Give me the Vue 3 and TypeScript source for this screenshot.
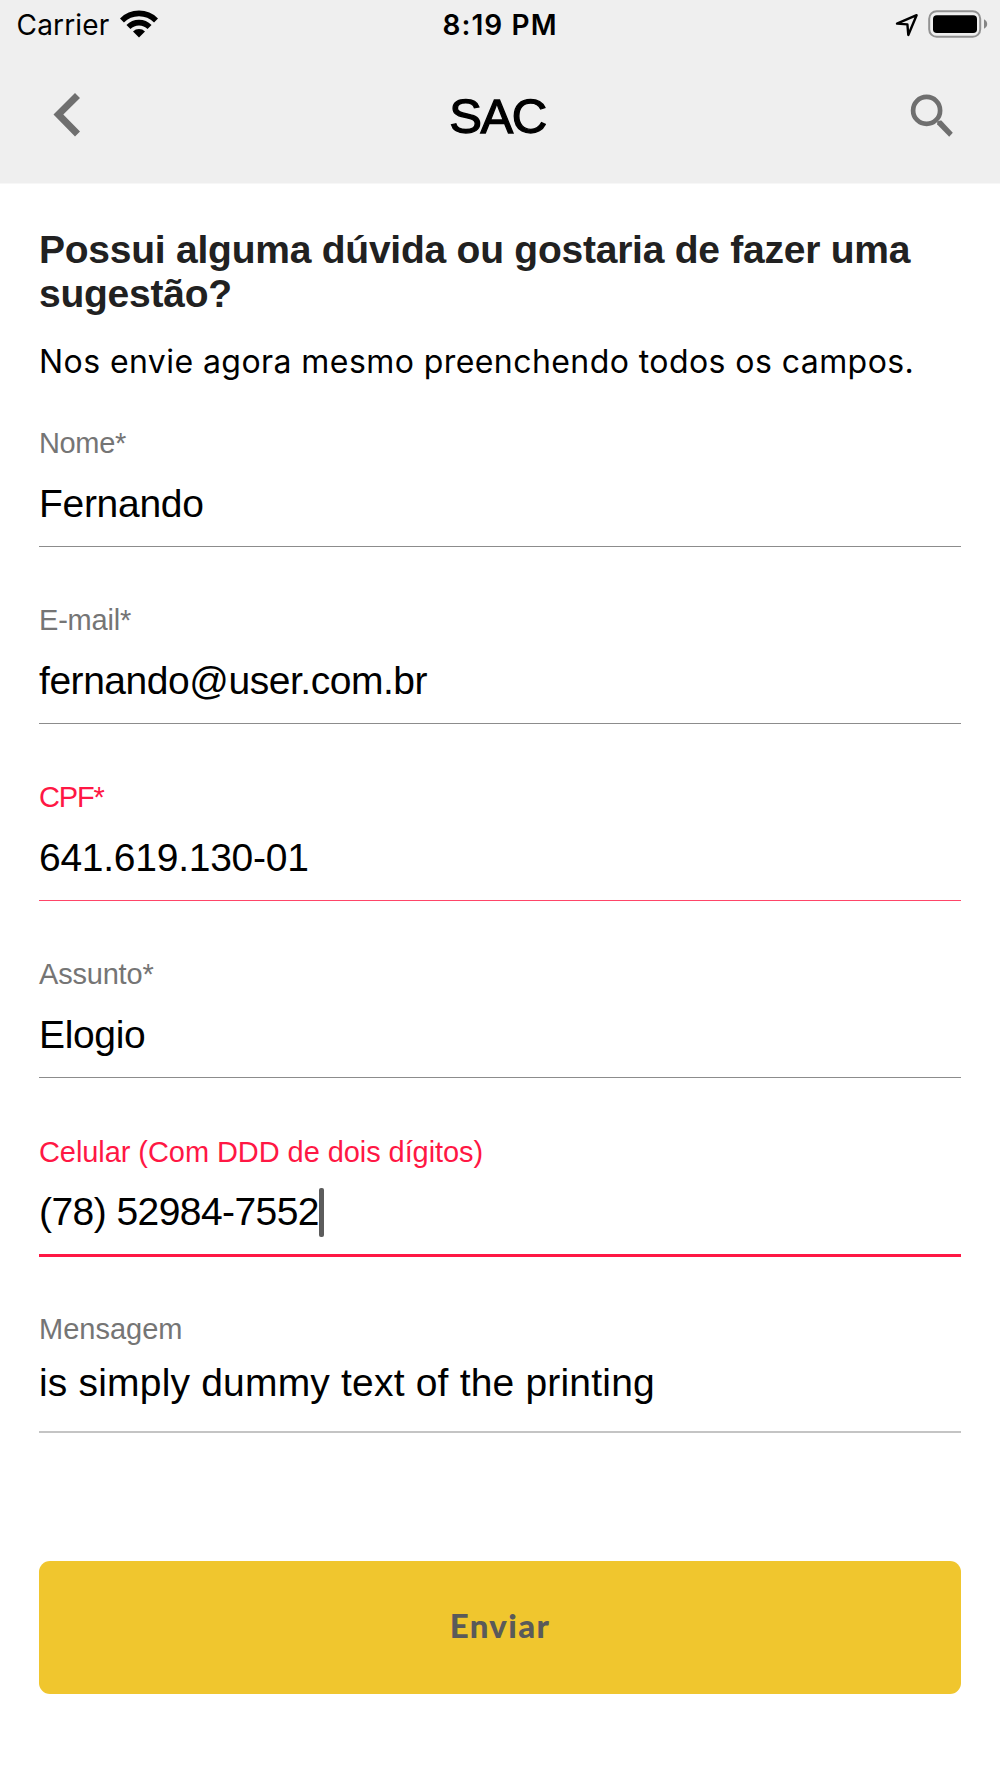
<script setup lang="ts">
interface Field {
  id: string
  label: string
  value: string
  labelTracking: number
  valueTracking: number
  state?: 'error' | 'active' | 'area'
}

const fields: Field[] = [
  { id: 'nome', label: 'Nome*', value: 'Fernando', labelTracking: -0.35, valueTracking: -0.3 },
  { id: 'email', label: 'E-mail*', value: 'fernando@user.com.br', labelTracking: -0.2, valueTracking: -0.46 },
  { id: 'cpf', label: 'CPF*', value: '641.619.130-01', labelTracking: -1.2, valueTracking: -0.26 },
  { id: 'assunto', label: 'Assunto*', value: 'Elogio', labelTracking: -0.2, valueTracking: -0.35 },
  {
    id: 'celular',
    label: 'Celular (Com DDD de dois dígitos)',
    value: '(78) 52984-7552',
    labelTracking: -0.07,
    valueTracking: -0.56,
    state: 'active',
  },
  {
    id: 'mensagem',
    label: 'Mensagem',
    value: 'is simply dummy text of the printing',
    labelTracking: 0,
    valueTracking: 0.19,
    state: 'area',
  },
]
fields[2].state = 'error'
</script>

<template>
  <div class="screen">
    <header class="top">
      <div class="status">
        <div class="status-left">
          <span class="carrier">Carrier</span>
          <svg class="wifi" width="38" height="28" viewBox="0 0 38 28">
            <path d="M1.96 10.46A24.1 24.1 0 0 1 36.04 10.46" fill="none" stroke="#000" stroke-width="5.6" />
            <path d="M8.46 16.96A14.9 14.9 0 0 1 29.54 16.96" fill="none" stroke="#000" stroke-width="5.6" />
            <path d="M19 27.5L13 21.5A8.5 8.5 0 0 1 25 21.5Z" />
          </svg>
        </div>
        <span class="time">8:19 PM</span>
        <div class="status-right">
          <svg width="26" height="28" viewBox="0 0 26 28">
            <path d="M3 13.6L22.6 5.2L14.3 25L13.4 14.4Z" fill="none" stroke="#000" stroke-width="2.4" stroke-linejoin="round" />
          </svg>
          <svg class="battery" width="60" height="30" viewBox="0 0 60 30">
            <rect x="1.2" y="2.2" width="51" height="25.6" rx="7.5" fill="none" stroke="#929292" stroke-width="2" />
            <rect x="5" y="6.2" width="44" height="17.8" rx="3.8" />
            <path d="M56 10.2Q59.2 12 59.2 15Q59.2 18 56 19.8Z" fill="#858585" />
          </svg>
        </div>
      </div>
      <nav class="bar">
        <svg class="back" width="28" height="46" viewBox="0 0 28 46">
          <path d="M22 1L27 6L10.3 22.6L27 39.4L22 44.5L.5 22.6Z" fill="#6f6f6f" />
        </svg>
        <h1>SAC</h1>
        <svg class="search" width="44" height="46" viewBox="0 0 44 46">
          <circle cx="16.6" cy="18.4" r="13.5" fill="none" stroke="#6f6f6f" stroke-width="4.7" />
          <path d="M27.2 32.4V29.4L30.2 28.6H31.4L42.8 40.8L39.2 44.8Z" fill="#6f6f6f" />
        </svg>
      </nav>
    </header>

    <main>
      <h2>Possui alguma dúvida ou gostaria de fazer uma sugestão?</h2>
      <p class="intro">Nos envie agora mesmo preenchendo todos os campos.</p>

      <form>
        <div v-for="f in fields" :key="f.id" class="field" :class="f.state">
          <div class="label" :style="{ letterSpacing: f.labelTracking + 'px' }">{{ f.label }}</div>
          <div class="value" :style="{ letterSpacing: f.valueTracking + 'px' }">
            <span>{{ f.value }}</span><i v-if="f.state === 'active'" class="caret"></i>
          </div>
          <div class="rule"></div>
        </div>
        <button type="button">Enviar</button>
      </form>
    </main>
  </div>
</template>

<style>
body {
  margin: 0;
  background: #fff;
}
</style>

<style scoped>
.screen {
  width: 1000px;
  height: 1778px;
  overflow: hidden;
  background: #fff;
  color: #000;
  font-family: "Liberation Sans", sans-serif;
}
.top {
  height: 183px;
  background: #efefef;
  border-bottom: 1px solid #f7f7f7;
  box-sizing: content-box;
}
.status {
  display: grid;
  grid-template-columns: 1fr auto 1fr;
  height: 50px;
  font-family: Inter, sans-serif;
  font-size: 28px;
  line-height: 51px;
}
.status-left {
  display: flex;
  align-items: flex-start;
  padding-left: 16.6px;
}
.carrier {
  letter-spacing: 0.15px;
}
.wifi {
  margin: 10px 0 0 11px;
}
.time {
  font-weight: 600;
  letter-spacing: 1.1px;
}
.status-right {
  display: flex;
  justify-content: flex-end;
  align-items: flex-start;
  padding-right: 12px;
}
.status-right svg {
  margin-top: 10px;
}
.status-right .battery {
  margin: 9px 0 0 8px;
}
.bar {
  display: grid;
  grid-template-columns: 1fr auto 1fr;
  align-items: start;
  padding: 42px 46px 0 53px;
}
h1 {
  margin: -6px 0 0 -12px;
  font-size: 49px;
  line-height: 60px;
  font-weight: 400;
  letter-spacing: -1.4px;
  -webkit-text-stroke: 1.3px #000;
}
.search {
  justify-self: end;
  margin-top: -0.4px;
}
main {
  padding: 43.6px 39px 0;
}
h2 {
  margin: 0;
  color: #212121;
  font-size: 39px;
  line-height: 44.6px;
  font-weight: 700;
  letter-spacing: -0.24px;
}
.intro {
  margin: 25.4px 0 0;
  font-family: Inter, sans-serif;
  font-size: 32px;
  line-height: 40px;
  letter-spacing: 0.43px;
  white-space: nowrap;
}
form {
  margin-top: 41px;
}
.field {
  display: flex;
  flex-direction: column;
  height: 177.1px;
}
.label {
  height: 40px;
  color: #757575;
  font-size: 29px;
  line-height: 40px;
  white-space: nowrap;
}
.value {
  display: flex;
  align-items: center;
  height: 50px;
  margin-top: 15.8px;
  font-size: 39px;
  line-height: 50px;
  white-space: nowrap;
}
.rule {
  height: 1px;
  margin-top: 17.2px;
  background: #8c8c8c;
}
.error .label,
.active .label {
  color: #ff1744;
}
.error .rule {
  background: #ff4568;
}
.active .rule {
  height: 3px;
  margin-top: 16.8px;
  background: #ff1744;
}
.area .value {
  margin-top: 9.6px;
}
.area .rule {
  height: 2px;
  margin-top: 22.8px;
  background: #c4c4c4;
}
.caret {
  width: 5px;
  height: 49px;
  margin-left: -0.5px;
  border-radius: 2px;
  background: #5c5c5c;
}
button {
  display: block;
  width: 922px;
  height: 133px;
  margin: 75px 0 0;
  padding: 0 0 5px;
  border: 0;
  border-radius: 11px;
  background: #f0c62e;
  color: #5a5a5a;
  font-family: Lato, sans-serif;
  font-size: 33px;
  font-weight: 900;
  letter-spacing: 1.35px;
}
</style>
